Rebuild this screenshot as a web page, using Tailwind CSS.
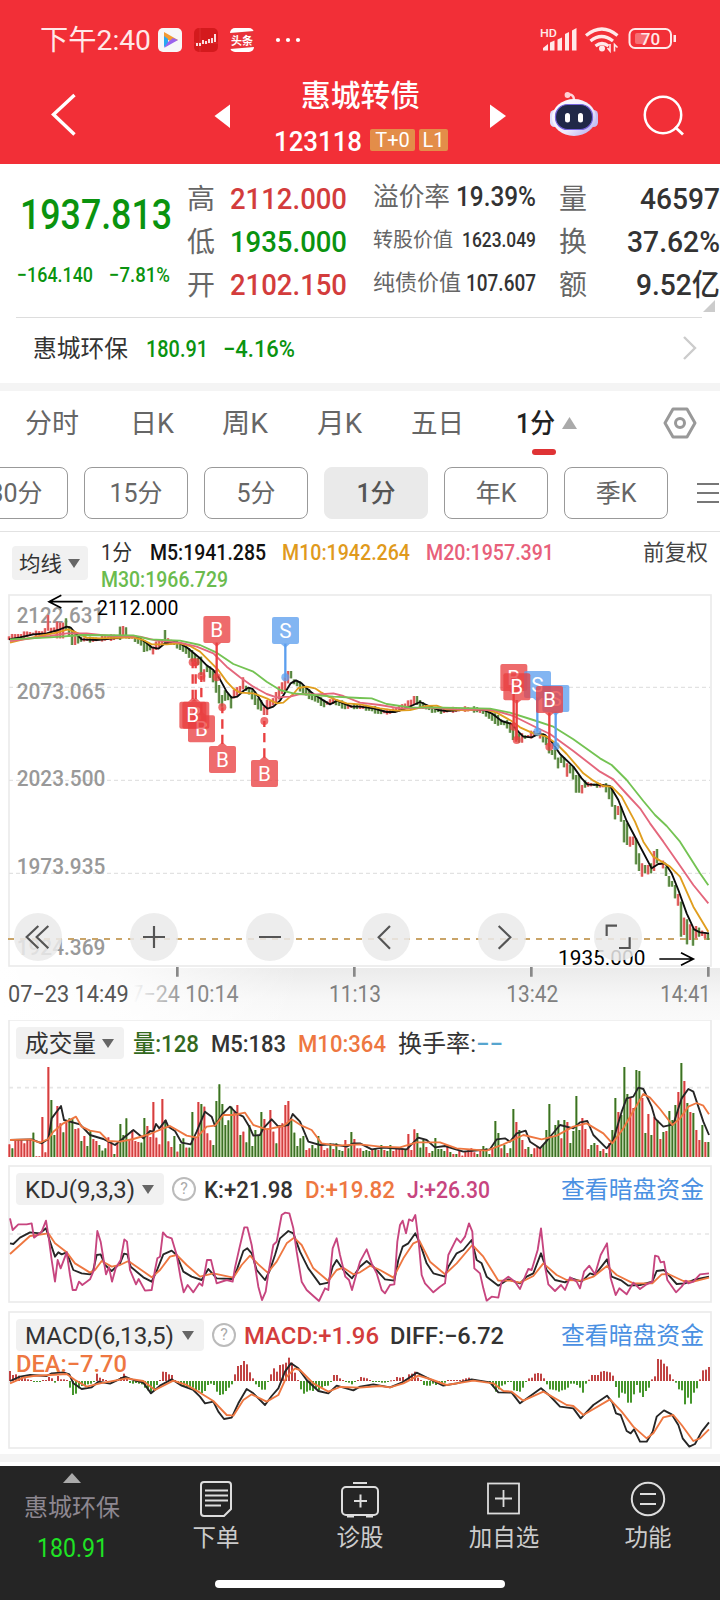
<!DOCTYPE html>
<html lang="zh-CN">
<head>
<meta charset="utf-8">
<title>惠城转债 123118</title>
<script src="https://cdn.jsdelivr.net/npm/@tailwindcss/browser@4"></script>
</head>
<body class="w-[720px] h-[1600px] overflow-hidden bg-white font-['Roboto','Noto_Sans_CJK_SC',sans-serif] text-[#333] flex flex-col">

<!-- status bar and title -->
<header class="relative h-[164px] bg-[#f22f37] text-white shrink-0">
  <div class="flex items-center h-[78px] pl-10">
    <span data-w="111" class="text-[28px] leading-[40px] text-[#ffe9e9]">下午2:40</span>
    <svg class="ml-[7px] mt-px" width="150" height="24" viewBox="0 0 150 24">
      <rect width="24" height="24" rx="5" fill="#f7f7f8"/>
      <path d="M6 4 20 12 14 14.500 6 9z" fill="#f39a32"/><path d="M6 8v11l4-2v-6z" fill="#27a9f2"/><path d="M20 12 6 20l4-6 5-4z" fill="#9a63ee"/>
      <rect x="36" width="24" height="24" rx="5" fill="#d41a1d"/>
      <path d="M42 0v24M36 15h24" stroke="#e23a3c" stroke-width=".6"/>
      <path d="M39 15v3M42 15v3M45 12v4M48 13v3M51 11v4M54 10v5M57 6v8" stroke="#fff" stroke-width="1.700"/>
      <rect x="72" width="24" height="24" rx="5" fill="#fff"/><path d="M72 5l24-2v16l-24 2z" fill="#e8333a"/>
      <text x="84" y="16.500" font-size="11" font-weight="700" text-anchor="middle" fill="#fff">头条</text>
      <circle cx="120" cy="12" r="2.100" fill="#fff"/><circle cx="130" cy="12" r="2.100" fill="#fff"/><circle cx="140" cy="12" r="2.100" fill="#fff"/>
    </svg>
    <svg class="ml-auto mr-[42px] mt-px" width="138" height="28" viewBox="0 0 138 28" fill="#ffe9e9">
      <text x="0" y="11" font-size="11" textLength="17" lengthAdjust="spacingAndGlyphs" font-weight="500" font-family="Roboto">HD</text>
      <path d="M3 24.500v-2.500l5-4v6.500zM10 24.500v-8l4.500-2v10zM17.500 24.500v-11l4.500-2v13zM25 24.500V8l4-2v18.500zM32 24.500V4.500l4.500-2.500v22.500z"/>
      <g fill="none" stroke="#ffe9e9" stroke-width="3.200"><path d="M46 9.500q16-13 31.500 0M50.500 15q11-9 22.500 0M55.500 20q6.500-5 13 0"/></g>
      <circle cx="62" cy="22.500" r="3"/><path d="M70 18v7l-2.500-3M74.500 25.500v-7l3 3" fill="none" stroke="#ffe9e9" stroke-width="1.600"/>
      <rect x="89.500" y="3" width="41.500" height="19" rx="5.500" fill="none" stroke="#ffe9e9" stroke-width="2"/>
      <rect x="95" y="7" width="12" height="11" rx="2" opacity=".35"/><path d="M133.500 9h2.500v7h-2.500z"/>
      <text x="110.500" y="18.500" font-size="17" font-weight="500" text-anchor="middle" font-family="Roboto">70</text>
    </svg>
  </div>
  <div class="flex h-[76px]">
    <svg width="270" height="76" viewBox="0 78 270 76" fill="none"><path d="M74.500 95 53.500 114.500 74.500 134.500" stroke="#fff" stroke-width="3.400"/><path d="M214.500 116 230 104.500V128z" fill="#fff"/></svg>
    <div class="w-[180px] flex flex-col items-center">
      <span data-w="119" class="text-[30px] leading-[34px] font-medium">惠城转债</span>
      <div class="flex items-center self-start pl-[4px] mt-[11px] h-[34px] leading-[34px]">
        <span data-w="88" class="text-[28px] font-medium leading-[34px]">123118</span>
        <span class="ml-[8px] w-[45px] h-[22px] rounded-[2px] bg-[#e38d49] text-[20px] leading-[23px] text-center">T+0</span>
        <span class="ml-[4px] w-[29px] h-[22px] rounded-[2px] bg-[#e38d49] text-[20px] leading-[23px] text-center">L1</span>
      </div>
    </div>
    <svg width="270" height="76" viewBox="450 78 270 76" fill="none">
      <defs><linearGradient id="bot" x1="0" y1="0" x2="1" y2="1"><stop offset="0" stop-color="#fff"/><stop offset=".6" stop-color="#efeafc"/><stop offset="1" stop-color="#a9a3ee"/></linearGradient></defs>
      <path d="M490 104.500 506 116 490 128z" fill="#fff"/>
      <path d="M566 95q8-2 8 5" stroke="#ffd5dc" stroke-width="2.400"/><circle cx="567.500" cy="95" r="2.900" fill="#ffd0d6"/>
      <rect x="550" y="110" width="9" height="17" rx="4.500" fill="#e0ddfa"/><rect x="589" y="110" width="9" height="17" rx="4.500" fill="#c5c0f4"/>
      <ellipse cx="574" cy="117.500" rx="22" ry="18.500" fill="url(#bot)"/>
      <rect x="555.500" y="104.500" width="37" height="25" rx="12" fill="#202848" stroke="#7764dc" stroke-width="1.200"/>
      <rect x="565" y="113" width="5" height="9.500" rx="2.500" fill="#fff"/><rect x="578" y="113" width="5" height="9.500" rx="2.500" fill="#fff"/>
      <circle cx="663" cy="115" r="18.200" stroke="#fff" stroke-width="2.500"/><path d="M675 127l8 7.500" stroke="#fff" stroke-width="2.800"/>
    </svg>
  </div>
</header>

<!-- quote -->
<section class="h-[153px] flex shrink-0 leading-[30px]">
  <div class="w-[187px] pl-[17px] text-[#0a930f] flex flex-col">
    <span data-w="152" class="ml-[3px] mt-[26px] text-[42px] leading-[46px] font-medium">1937.813</span>
    <div class="flex mt-[26px] h-[24px] text-[21px] leading-[24px] font-medium"><span data-w="76">−164.140</span><span data-w="61" class="ml-[16px]">−7.81%</span></div>
  </div>
  <div class="w-[186px] pt-[12px] grid grid-cols-[43px_1fr] grid-rows-[43px_43px_43px] items-center text-[#666]">
    <span data-w="28" class="text-[28px]">高</span><span data-w="117" class="text-[29px] font-medium text-[#d33c3c]">2112.000</span>
    <span data-w="28" class="text-[28px]">低</span><span data-w="117" class="text-[29px] font-medium text-[#0a930f]">1935.000</span>
    <span data-w="28" class="text-[28px]">开</span><span data-w="117" class="text-[29px] font-medium text-[#d33c3c]">2102.150</span>
  </div>
  <div class="w-[163px] pt-[11px] grid grid-rows-[42px_43px_43px] items-center text-[#666]">
    <div class="flex items-center justify-between"><span data-w="77" class="text-[26px]">溢价率</span><span data-w="80" class="text-[27px] font-medium text-[#333]">19.39%</span></div>
    <div class="flex items-center justify-between"><span data-w="80" class="text-[20px]">转股价值</span><span data-w="74" class="text-[21px] font-medium text-[#333]">1623.049</span></div>
    <div class="flex items-center justify-between"><span data-w="88" class="text-[22px]">纯债价值</span><span data-w="70" class="text-[23px] font-medium text-[#333]">107.607</span></div>
  </div>
  <div class="relative w-[184px] pl-[23px] pt-[12px] grid grid-rows-[43px_43px_43px] items-center text-[#666] text-[28px]">
    <div class="flex items-center justify-between"><span data-w="28">量</span><span data-w="80" class="text-[30px] font-medium text-[#333]">46597</span></div>
    <div class="flex items-center justify-between"><span data-w="28">换</span><span data-w="93" class="text-[30px] font-medium text-[#333]">37.62%</span></div>
    <div class="flex items-center justify-between"><span data-w="28">额</span><span data-w="84" class="text-[30px] font-medium text-[#333]">9.52亿</span></div>
    <svg class="absolute right-[5px] bottom-[5px]" width="12" height="12"><path d="M12 0v12H0z" fill="#ccc"/></svg>
  </div>
</section>

<section class="h-[66px] ml-4 mr-[18px] border-t border-[#ddd] flex items-center pl-[17px] pr-[5px] pb-[5px] text-[24px] leading-[30px] shrink-0">
  <span data-w="95">惠城环保</span>
  <span data-w="62" class="ml-[18px] font-medium text-[#0a930f]">180.91</span>
  <span data-w="72" class="ml-[15px] font-medium text-[#0a930f]">−4.16%</span>
  <svg class="ml-auto" width="15" height="24" viewBox="0 0 15 24"><path d="M2 1 13 12 2 23" fill="none" stroke="#ccc" stroke-width="2.400"/></svg>
</section>
<div class="h-2 bg-[#f4f4f4] shrink-0"></div>

<!-- period tabs -->
<nav class="relative h-[76px] shrink-0 pb-[12px] flex items-center text-[27px] leading-[36px] text-[#666]">
  <span data-w="54" class="ml-[25px]">分时</span>
  <span data-w="44" class="ml-[51px]">日K</span>
  <span data-w="46" class="ml-[48px]">周K</span>
  <span data-w="45" class="ml-[49px]">月K</span>
  <span data-w="53" class="ml-[49px]">五日</span>
  <span data-w="39" class="ml-[52px] font-medium text-[#222]">1分</span>
  <svg class="ml-[7px]" width="15" height="13"><path d="M7.500 0 15 12H0z" fill="#aaa"/></svg>
  <svg class="ml-[86px]" width="34" height="34" viewBox="0 0 34 34" fill="none" stroke="#999"><path d="M10 3h14l8 14-8 14H10L2 17z" stroke-width="3" stroke-linejoin="round"/><circle cx="17" cy="17" r="4.500" stroke-width="3"/></svg>
  <i class="absolute left-[532px] top-[58px] w-6 h-[6px] rounded-full bg-[#df3335]"></i>
</nav>
<div class="h-[65px] shrink-0 border-b border-[#e2e2e2] flex items-start text-[25px] text-center leading-[52px] text-[#666]">
  <span class="w-[104px] h-[52px] ml-[-36px] border border-[#999] rounded-lg shrink-0">30分</span>
  <span class="w-[104px] h-[52px] ml-4 border border-[#999] rounded-lg shrink-0">15分</span>
  <span class="w-[104px] h-[52px] ml-4 border border-[#999] rounded-lg shrink-0">5分</span>
  <span class="w-[104px] h-[52px] ml-4 border border-[#eaeaea] bg-[#eaeaea] rounded-lg shrink-0 font-medium text-[#555]">1分</span>
  <span class="w-[104px] h-[52px] ml-4 border border-[#999] rounded-lg shrink-0">年K</span>
  <span class="w-[104px] h-[52px] ml-4 border border-[#999] rounded-lg shrink-0">季K</span>
  <svg class="ml-[29px] mt-[15px] shrink-0" width="22" height="22"><path d="M0 2h22M0 11h22M0 20h22" stroke="#777" stroke-width="1.800"/></svg>
</div>

<!-- moving averages -->
<div class="h-[58px] shrink-0 flex text-[22px] leading-[27px]">
  <span class="w-[76px] h-[34px] ml-3 mt-[14px] rounded bg-[#f1f1f1] flex items-center justify-between pl-[7px] pr-2 text-[21px]"><span data-w="43">均线</span><svg width="12" height="9"><path d="M0 0h12L6 9z" fill="#666"/></svg></span>
  <div class="ml-[13px] mt-[6px] grow font-medium">
    <div class="flex">
      <span data-w="31" class="font-normal">1分</span>
      <span data-w="116" class="ml-[18px] text-[#111]">M5:1941.285</span>
      <span data-w="128" class="ml-[16px] text-[#e09a1c]">M10:1942.264</span>
      <span data-w="128" class="ml-[16px] text-[#e8607a]">M20:1957.391</span>
      <span data-w="65" class="ml-auto mr-[12px] font-normal text-[#444]">前复权</span>
    </div>
    <div><span data-w="127" class="text-[#6bbb4e]">M30:1966.729</span></div>
  </div>
</div>

<!-- candles; chart units are thirds of a pixel -->
<svg id="main" class="shrink-0 block" width="720" height="430" viewBox="0 0 2160 1290" font-family="Roboto">
  <defs>
    <linearGradient id="shade" x1="0" y1="0" x2="0" y2="1"><stop offset="0" stop-color="#ebebeb"/><stop offset=".6" stop-color="#f7f7f7"/><stop offset="1" stop-color="#fafafa"/></linearGradient>
    <linearGradient id="white" x1="0" y1="0" x2="1" y2="0"><stop offset="0" stop-color="#fff"/><stop offset=".4" stop-color="#fff" stop-opacity=".8"/><stop offset="1" stop-color="#fff" stop-opacity="0"/></linearGradient>
    <linearGradient id="fade" gradientUnits="userSpaceOnUse" x1="400" y1="0" x2="560" y2="0"><stop offset="0" stop-color="#888" stop-opacity="0"/><stop offset="1" stop-color="#888"/></linearGradient>
  </defs>
  <rect y="1134" width="2160" height="156" fill="url(#shade)"/><rect y="1134" width="900" height="156" fill="url(#white)"/>
  <rect x="27" y="15" width="2106" height="1113" fill="#fff" stroke="#ebebeb" stroke-width="5"/>
  <path d="M27 292H2130M27 571H2130M27 850H2130" stroke="#e2e2e2" stroke-width="4" stroke-dasharray="12 9"/>
  <g font-size="68" fill="#999" font-weight="500">
    <text x="50" y="99" textLength="262" lengthAdjust="spacingAndGlyphs">2122.631</text>
    <text x="50" y="326" textLength="266" lengthAdjust="spacingAndGlyphs">2073.065</text>
    <text x="50" y="587" textLength="266" lengthAdjust="spacingAndGlyphs">2023.500</text>
    <text x="50" y="852" textLength="266" lengthAdjust="spacingAndGlyphs">1973.935</text>
    <text x="50" y="1095" textLength="266" lengthAdjust="spacingAndGlyphs">1924.369</text>
  </g>
  <path d="M24 1047H2130" stroke="#c9a468" stroke-width="6" stroke-dasharray="18 18"/>
  <g id="candles"></g><g id="ma" fill="none"></g>
  <text x="291" y="75" font-size="62" textLength="244" lengthAdjust="spacingAndGlyphs" fill="#000">2112.000</text>
  <text x="1674" y="1125" font-size="62" textLength="262" lengthAdjust="spacingAndGlyphs" fill="#000">1935.000</text>
  <path d="M248 35H147M184 16 147 35l37 19M1978 1107h102M2043 1088l37 19-37 19" fill="none" stroke="#000" stroke-width="5"/>
  <g id="marks" fill="none"></g>
  <g fill="#eaeaea" fill-opacity=".86"><circle cx="114" cy="1041" r="72"/><circle cx="462" cy="1041" r="72"/><circle cx="810" cy="1041" r="72"/><circle cx="1158" cy="1041" r="72"/><circle cx="1506" cy="1041" r="72"/><circle cx="1854" cy="1041" r="72"/></g>
  <path d="M115 1008 80 1041l35 34M145 1008l-35 33 35 34M429 1041h66M462 1008v66M777 1041h66M1170 1008l-34 34 34 34M1496 1008l35 34-35 34M1820 1038v-31h31M1857 1074h32v-32" fill="none" stroke="#555" stroke-width="6.500"/>
  <path d="M532 1131v29M1063 1131v29M1594 1131v29M2125 1131v29" stroke="#888" stroke-width="8"/>
  <g font-size="69" fill="#808080">
    <text x="24" y="1235" fill="#555" textLength="362" lengthAdjust="spacingAndGlyphs">07−23 14:49</text>
    <text x="394" y="1235" fill="url(#fade)" textLength="322" lengthAdjust="spacingAndGlyphs">7−24 10:14</text>
    <text x="987" y="1235" textLength="156" lengthAdjust="spacingAndGlyphs">11:13</text>
    <text x="1519" y="1235" textLength="156" lengthAdjust="spacingAndGlyphs">13:42</text>
    <text x="1981" y="1235" textLength="151" lengthAdjust="spacingAndGlyphs">14:41</text>
  </g>
</svg>

<!-- volume -->
<section class="relative h-[145px] shrink-0">
  <svg id="vol" class="absolute inset-0" width="720" height="145" viewBox="0 15 2160 435"><path d="M27 426V15H2133V426" fill="none" stroke="#ebebeb" stroke-width="5"/><path d="M27 218H2130" stroke="#e6e6e6" stroke-width="5" stroke-dasharray="12 12"/></svg>
  <div class="relative flex items-center pl-4 pt-[7px] text-[24px] leading-[32px] font-medium">
    <span class="w-[108px] h-[32px] rounded bg-[#f1f1f1] flex items-center justify-between pl-[9px] pr-[10px] font-normal"><span data-w="71">成交量</span><svg width="12" height="9"><path d="M0 0h12L6 9z" fill="#666"/></svg></span>
    <span data-w="66" class="ml-[9px] text-[#33691e]">量:128</span>
    <span data-w="75" class="ml-[12px]">M5:183</span>
    <span data-w="88" class="ml-[12px] text-[#ee7741]">M10:364</span>
    <span data-w="78" class="ml-[12px] font-normal">换手率:</span><span data-w="27" class="text-[#56a5cf]">−−</span>
  </div>
</section>
<!-- KDJ -->
<section class="relative h-[146px] shrink-0">
  <svg id="kdj" class="absolute inset-0" width="720" height="146" viewBox="0 450 2160 438"><rect x="27" y="453" width="2106" height="408" fill="none" stroke="#ebebeb" stroke-width="5"/><path d="M27 657H2130" stroke="#e6e6e6" stroke-width="5" stroke-dasharray="12 12"/></svg>
  <div class="relative flex items-center pl-4 pr-[16px] pt-2 text-[24px] leading-[32px] font-medium">
    <span class="w-[148px] h-[32px] rounded bg-[#f1f1f1] flex items-center justify-between pl-[9px] pr-[10px] font-normal"><span data-w="110">KDJ(9,3,3)</span><svg width="12" height="9"><path d="M0 0h12L6 9z" fill="#666"/></svg></span>
    <span class="ml-2 size-[24px] rounded-full border-2 border-[#bbb] text-[#aaa] text-[16px] leading-[20px] text-center font-normal">?</span>
    <span data-w="89" class="ml-[8px]">K:+21.98</span>
    <span data-w="90" class="ml-[12px] text-[#ee7741]">D:+19.82</span>
    <span data-w="83" class="ml-[12px] text-[#c7457f]">J:+26.30</span>
    <span data-w="143" class="ml-auto font-normal text-[#4a90e2]">查看暗盘资金</span>
  </div>
</section>
<!-- MACD -->
<section class="relative h-[143px] shrink-0">
  <svg id="macd" class="absolute inset-0" width="720" height="143" viewBox="0 888 2160 429"><rect x="27" y="891" width="2106" height="408" fill="none" stroke="#ebebeb" stroke-width="5"/></svg>
  <div class="relative flex items-center pl-4 pr-[16px] pt-2 text-[24px] leading-[32px] font-medium">
    <span class="w-[188px] h-[32px] rounded bg-[#f1f1f1] flex items-center justify-between pl-[9px] pr-[10px] font-normal"><span data-w="149">MACD(6,13,5)</span><svg width="12" height="9"><path d="M0 0h12L6 9z" fill="#666"/></svg></span>
    <span class="ml-2 size-[24px] rounded-full border-2 border-[#bbb] text-[#aaa] text-[16px] leading-[20px] text-center font-normal">?</span>
    <span data-w="135" class="ml-[8px] text-[#d33c3c]">MACD:+1.96</span>
    <span data-w="114" class="ml-[11px]">DIFF:−6.72</span>
    <span data-w="143" class="ml-auto font-normal text-[#4a90e2]">查看暗盘资金</span>
  </div>
  <div class="relative pl-4 text-[24px] leading-[24px] font-medium text-[#ee7741]"><span data-w="111">DEA:−7.70</span></div>
</section>
<div class="h-2 bg-[#f4f4f4] mb-1 shrink-0"></div>

<!-- bottom bar -->
<footer class="h-[134px] shrink-0 bg-[#252525] text-[#ccc] flex flex-col">
  <div class="grid grid-cols-5 h-[114px] text-[23.500px] leading-[30px]">
    <div class="flex flex-col items-center pt-[7px]"><svg width="18" height="10"><path d="M9 0 18 10H0z" fill="#aaa"/></svg>
      <span data-w="96" class="mt-[9px] text-[24px] text-[#8d8790]">惠城环保</span>
      <span data-w="71" class="mt-[11px] text-[25px] text-[#1fe324]">180.91</span></div>
    <div class="flex flex-col items-center pt-[14px]"><svg width="40" height="38" viewBox="0 0 40 38" fill="none" stroke="#ddd" stroke-width="2"><path d="M8 2h24q3 0 3 3v24l-7 7H8q-3 0-3-3V5q0-3 3-3z"/><path d="M9 10.500h23M9 15.500h23M9 20.500h23M9 25.500h16"/></svg><span class="mt-[5px]">下单</span></div>
    <div class="flex flex-col items-center pt-[14px]"><svg width="40" height="38" viewBox="0 0 40 38" fill="none" stroke="#ddd" stroke-width="2"><rect x="2" y="7" width="36" height="28" rx="4"/><path d="M13 3h14M14 21h13M20.500 14.500v13"/><path d="M7 36h7M26 36h7" stroke-width="3"/></svg><span class="mt-[5px]">诊股</span></div>
    <div class="flex flex-col items-center pt-[14px]"><svg width="40" height="38" viewBox="0 0 40 38" fill="none" stroke="#ddd" stroke-width="1.800"><rect x="4" y="3.500" width="31" height="30"/><path d="M11 18.500h17M19.500 10v17"/></svg><span class="mt-[5px]">加自选</span></div>
    <div class="flex flex-col items-center pt-[14px]"><svg width="40" height="38" viewBox="0 0 40 38" fill="none" stroke="#ddd" stroke-width="2"><circle cx="20" cy="19" r="16.200"/><path d="M12 14h16M12 24h16"/></svg><span class="mt-[5px]">功能</span></div>
  </div>
  <div class="w-[290px] h-2 rounded-full bg-white mx-auto"></div>
</footer>

<script>
const NS = 'http://www.w3.org/2000/svg', $ = id => document.getElementById(id);
function add(p, tag, a, text) { const e = document.createElementNS(NS, tag); for (const k in a) e.setAttribute(k, a[k]); if (text) e.textContent = text; p.appendChild(e); return e; }

// Fit each label to its slot width, one line high
document.querySelectorAll('[data-w]').forEach(el => {
  const w = el.dataset.w, t = el.textContent;
  el.textContent = '';
  el.style.cssText = `display:block;flex:none;width:${w}px`;
  const s = add(el, 'svg', { width: w, style: 'display:block;height:1lh;overflow:visible' });
  add(s, 'text', { x: 0, y: '50%', dy: '.375em', textLength: w, lengthAdjust: 'spacingAndGlyphs', fill: 'currentColor' }, t);
});

// Left half and right half (right half starts at 1080)
function pts(l, r) { const f = (s, d) => s.trim().split(/\s+/).map(q => q.split(',').map(Number)).map(([x, y]) => [x + d, y]); return f(l, 0).concat(f(r, 1080)); }
function line(p, color, P) { add(p, 'polyline', { points: P.map(q => q.join(',')).join(' '), stroke: color, fill: 'none', 'stroke-width': 5.6, 'stroke-linejoin': 'round' }); }
const at = (P, x) => { for (let i = 1; i < P.length; i++) if (x <= P[i][0]) { const [a, b] = P[i - 1], [c, d] = P[i]; return b + (d - b) * Math.max(0, x - a) / (c - a); } return P[P.length - 1][1]; };
function bar(p, x, y, y2, red) { add(p, 'rect', { x: x - 4, y, width: 8, height: y2 - y, fill: red ? '#f28484' : '#8fb576' }); add(p, 'rect', { x: x - 1.5, y, width: 3.5, height: y2 - y, fill: red ? '#d04040' : '#3c6f26' }); }

const m5 = pts('27,148 60,142 100,133 140,130 175,120 200,110 212,113 225,128 245,148 290,150 340,145 385,140 415,143 435,155 455,172 475,176 495,160 520,155 540,160 560,172 580,188 600,205 620,226 640,240 660,268 680,305 695,323 712,320 730,303 745,293 758,297 775,320 790,345 803,356 820,350 840,332 858,303 872,280 888,271 905,280 920,295 940,312 965,328 990,343 1012,332 1030,340 1055,350',
 '0,350 40,355 80,366 105,366 130,358 160,345 180,336 200,345 235,360 260,363 330,358 370,360 395,370 425,393 455,402 475,425 490,440 515,442 535,432 555,435 575,455 600,492 640,530 665,565 682,583 720,585 750,588 775,630 800,693 830,750 875,835 895,822 915,820 935,850 955,900 980,970 1002,1018 1020,1027 1047,1030');
const fixed = {};
'144,75,122,r 171,95,145,r 180,98,145,r 189,98,145,r 198,85,120,g 216,120,165,g 225,125,165,r 360,110,150,g 369,108,135,r 378,112,145,g 432,150,186,g 459,170,193,r 495,120,160,g 576,180,215,g 603,200,255,g 612,238,275,r 648,240,308,g 657,285,340,g 666,315,350,g 693,318,355,g 702,300,325,r 729,262,298,r 765,305,345,g 774,325,358,g 783,330,362,g 792,350,375,r 801,330,375,r 855,262,300,r 864,243,280,r 873,243,265,g 1242,318,345,r 1251,318,345,g 1485,370,402,g 1494,375,407,g 1539,400,450,g 1548,410,455,r 1557,430,458,g 1566,430,458,r 1647,440,490,g 1656,480,495,g 1674,503,535,g 1701,520,560,r 1728,555,608,g 1737,555,608,g 1746,585,610,r 1836,590,650,g 1845,645,688,g 1854,648,675,r 1863,650,695,g 1872,690,757,g 1881,700,765,g 1890,740,770,r 1899,740,765,r 1908,745,823,g 1917,790,843,g 1926,820,860,r 1935,825,850,g 1944,825,853,r 1953,820,850,g 1962,783,843,r 1971,777,820,g 1989,812,835,r 1998,830,858,g 2007,858,890,g 2016,873,890,g 2025,885,925,g 2034,912,947,r 2043,935,1040,g 2052,983,1035,r 2061,988,1063,g 2070,1003,1050,r 2079,1015,1067,g 2088,1008,1045,r 2097,1013,1040,g 2106,1022,1038,r 2115,1030,1045,r 2124,1030,1050,g'
 .split(' ').forEach(s => { const [x, a, b, c] = s.split(','); fixed[x] = [+a, +b, c === 'r']; });
for (let x = 27; x <= 2127; x += 9) {
  if (fixed[x]) { bar($('candles'), x, ...fixed[x]); continue; }
  const y = at(m5, x + 16), d = y - at(m5, x + 4), h = 3 + (x * 7 % 11) * .7 + Math.abs(d) * .7;
  bar($('candles'), x, y - h, y + h * .8, d < 0 || (Math.abs(d) < 3 && x % 4 < 2));
}
const ma = $('ma');
line(ma, '#0c0c0c', m5);
line(ma, '#e09e1e', pts('30,158 70,148 120,138 170,128 205,118 235,130 260,143 300,145 400,142 430,150 455,163 500,163 540,160 570,168 600,185 630,215 655,240 680,275 700,296 720,308 760,310 800,325 830,340 850,338 880,312 895,294 920,290 945,295 965,308 985,320 1010,330 1040,340', '0,343 60,355 110,362 150,360 200,348 230,347 260,358 320,361 370,357 410,368 455,393 480,412 520,430 560,440 590,462 620,492 670,550 700,572 730,588 755,590 785,620 825,695 850,755 880,800 930,830 960,860 1000,950 1045,1025'));
line(ma, '#e4677c', pts('30,153 150,138 200,130 260,130 330,138 420,140 470,152 540,158 590,170 640,190 680,230 720,262 760,290 800,312 830,322 870,320 900,312 950,313 1000,310 1030,318', '0,338 60,345 120,355 200,353 300,358 400,360 460,378 520,408 570,432 640,483 720,545 760,568 800,612 840,655 870,700 910,755 955,820 1000,885 1045,940'));
line(ma, '#74c353', pts('30,148 150,142 250,135 400,136 450,148 540,152 600,165 650,188 700,222 760,245 800,275 840,300 880,310 940,315 1000,320', '0,324 35,325 80,342 150,352 250,353 390,356 450,368 520,390 580,410 640,448 720,505 755,525 800,570 850,633 885,675 920,708 960,755 1020,850 1045,886'));

// Trade markers: x, box top, anchor y, side
[[587,335,217,'B'],[604,376,258,'B'],[578,335,217,'B'],[667,468,352,'B'],[793,510,393,'B'],[650,78,262,'B'],[856,81,262,'S'],[1541,222,410,'B'],[1612,243,425,'S'],[1550,250,450,'B'],[1667,285,468,'S'],[1648,288,470,'B']].forEach(([x, t, y, s]) => {
  const c = s === 'B' ? '#e93f40' : '#5c9fee', up = t < y, e = up ? t + 80 : t;
  add($('marks'), 'path', { d: `M${x} ${y}V${e}`, stroke: c, 'stroke-width': 7, ...(up ? {} : { 'stroke-dasharray': '28 18', 'stroke-dashoffset': 10 }) });
  add($('marks'), 'circle', { cx: x, cy: y, r: 12, fill: c, 'fill-opacity': .75 });
  add($('marks'), 'path', { d: up ? `M${x - 14} ${e}h28l-14 12z` : `M${x - 14} ${e}h28l-14-12z`, fill: c, 'fill-opacity': .77 });
  add($('marks'), 'rect', { x: x - 40, y: t, width: 81, height: 81, rx: 6, fill: c, 'fill-opacity': .77 });
  add($('marks'), 'text', { x, y: t + 62, 'font-size': 62, 'text-anchor': 'middle', fill: '#fff' }, s);
});

// Volume: bar tops with colour
const V = '388r400g378r372r372r385r372r375r353g424r424r306r412r156r255g360g273r325r352g320r310g310g342r340r378g363r393g345g372r378r390g407g400g367r382r417g385r327g360g310g372r345r378r381r383g309g333r366r261r368r388r252r315g379r396r363g410r387g370g398r398g291g370r261r267g275r355r376r390g258g208g267g330g316g275g290r270r360g350r382g330g393g345g360g291g312r340r285r350r385g330r325r270r258r315g353g393g370g363g405r400r390g400g363g385r405r400r385g402r385g405g408g375r400g351g372r400r' +
 '400r408g405g408g405r400g405r390g405r408g390g408r400r402r400r402g357r405r343r354g398g375g396r414r408g369g402g402g408g390r411g417r417g405r422r410r402r400r412r417g408r393g400g417g400r318g354g400r390g414r400g282g321r345g375r402r396g417g400r396r400r390g345g267g363g330g316g370r315g321r384g348g243g345g309r342r402r390g384g390r408g402r414g384r345g249g291r300g156g237g249r279r165g168g249r354g297r360g306r315g372r351g348r288g315g270g231r144g198r264g291r294g345r375r330g381r381g';
[...V.matchAll(/(\d+)(r|g)/g)].forEach((m, i) => bar($('vol'), 28 + 9 * i, +m[1], 426, m[2] === 'r'));
line($('vol'), '#262626', pts('30,375 95,373 125,385 145,372 155,310 183,273 192,315 240,328 270,360 310,372 345,390 400,345 430,370 450,348 460,350 468,327 478,340 497,316 505,335 525,348 545,383 572,388 590,350 615,290 635,305 645,333 665,300 690,275 710,295 730,305 748,335 760,362 780,360 790,340 815,313 835,335 865,330 878,297 900,320 925,380 960,390 1000,388 1040,395 1060,385', '0,385 35,403 70,398 140,403 175,368 200,375 225,397 255,393 310,410 390,403 410,373 435,370 450,380 470,355 497,347 510,380 540,400 560,378 600,330 640,340 660,322 682,318 700,360 740,400 760,375 785,290 800,250 820,245 835,218 850,222 875,275 885,310 910,335 940,328 965,250 985,222 1000,230 1015,275 1030,320 1047,360'));
line($('vol'), '#ee7741', pts('30,375 90,373 120,383 145,372 160,350 190,325 228,305 245,335 270,347 300,352 325,378 360,380 400,372 450,357 490,340 510,333 560,362 590,368 620,335 645,332 670,300 700,300 735,293 760,330 800,343 850,333 875,313 905,332 935,345 965,385 1010,392', '0,388 60,395 120,397 170,382 240,382 290,400 380,407 430,388 490,360 545,373 590,362 640,335 680,325 730,355 757,385 790,340 850,237 870,248 900,282 937,330 960,310 985,275 1010,264 1030,272 1047,298'));

line($('kdj'), '#262626', pts('30,685 40,687 60,668 90,652 120,655 138,640 150,680 165,725 175,712 185,718 200,712 220,765 245,775 270,778 280,765 290,720 302,718 315,750 335,768 360,745 372,716 382,718 392,755 410,770 430,787 455,800 470,768 490,718 515,707 530,720 550,770 575,785 605,795 625,762 650,790 698,792 712,760 730,708 742,700 755,715 770,765 795,795 810,765 825,720 840,670 865,648 880,655 900,710 925,760 960,808 985,803 998,755 1010,735 1030,765 1056,790', '0,755 20,738 40,755 75,793 103,797 115,735 128,695 145,685 166,655 180,685 200,745 220,775 255,785 265,755 290,715 310,705 335,675 350,735 365,745 380,785 415,812 445,793 480,805 500,785 520,775 543,715 560,765 585,795 615,802 635,790 665,800 690,775 705,780 741,733 755,785 785,797 805,812 840,810 877,800 890,768 912,765 930,785 950,807 975,805 1000,795 1047,785'));
line($('kdj'), '#ee7741', pts('30,717 60,690 90,663 145,655 165,685 200,712 225,745 270,773 285,765 305,738 335,755 360,750 385,738 410,755 455,787 480,765 510,725 530,720 560,750 600,785 640,775 700,788 725,750 750,722 775,748 803,773 830,740 860,685 882,668 905,690 940,760 985,798 1010,765 1030,758 1060,778', '0,772 30,752 60,765 100,788 130,730 160,685 178,677 210,740 255,778 290,745 337,690 370,725 415,797 450,797 480,803 520,783 550,745 590,780 620,795 665,797 700,785 741,753 770,780 820,805 877,805 905,778 925,777 970,798 1000,800 1047,788'));
line($('kdj'), '#c7457f', pts('30,610 38,645 55,628 80,628 95,625 102,668 125,650 138,617 145,660 155,735 165,800 173,735 182,760 200,712 210,780 218,825 228,825 237,800 247,810 270,793 282,765 292,648 302,680 318,778 327,757 336,800 347,760 362,735 373,673 381,680 390,765 408,808 416,792 435,827 455,825 465,765 472,730 480,725 489,652 500,665 515,670 530,720 542,790 551,832 563,810 580,832 598,805 607,812 621,735 633,735 650,805 680,795 698,800 705,758 718,700 733,637 742,637 755,690 775,815 786,855 797,830 805,775 820,690 830,680 845,600 855,593 868,595 880,640 890,710 905,800 920,825 940,843 957,858 975,820 985,825 998,700 1010,670 1020,720 1036,785 1047,795 1056,825 1070,775', '0,740 20,703 35,745 50,775 65,825 75,835 90,810 103,808 112,680 120,630 128,617 138,655 147,613 157,618 166,600 176,680 185,780 195,805 220,832 240,815 255,805 265,720 290,670 302,683 315,665 327,625 337,650 343,760 360,775 370,820 380,857 395,845 415,848 425,800 445,785 465,800 480,822 497,780 505,762 515,765 533,705 543,640 556,760 565,808 585,828 603,810 615,825 630,787 650,800 660,820 672,770 688,752 705,778 722,720 741,685 752,790 767,840 778,820 800,838 820,803 840,822 860,808 877,800 885,722 895,725 902,742 912,740 922,795 948,832 965,815 978,797 985,805 1000,800 1020,778 1047,775'));

[30,18,20,16,12,8,5,3,-2,-2,-2,3,3,12,8,-5,15,5,5,3,-20,-42,-38,-22,-15,-12,-10,-8,-3,22,10,6,3,-3,-5,3,5,12,22,8,-6,-8,-6,-8,-10,-20,-28,-35,-25,-12,3,28,27,20,18,3,-8,-12,-16,-20,-22,-20,-30,-28,-36,-30,-12,-8,-12,-32,-42,-40,-30,-20,-10,20,45,48,60,50,26,8,-10,-18,-26,-26,-3,20,38,28,48,50,55,70,55,25,3,-25,-38,-32,-28,-30,-22,-28,-20,-15,-14,-3,18,18,8,3,-3,-5,-10,-3,3,
 12,10,8,3,-3,-2,-3,-5,-5,-2,2,3,12,10,12,5,20,22,28,10,3,-12,-14,-14,-8,-12,-8,-6,-5,3,3,3,3,3,5,8,10,6,3,2,2,-2,-4,-8,-16,-32,-25,-14,-10,-3,-3,-28,-30,-32,-20,-3,8,10,22,24,22,8,-10,-25,-26,-28,-32,-28,-26,-20,-8,-8,-12,-20,-35,-8,4,18,18,18,28,30,28,26,16,-18,-50,-35,-38,-65,-65,-40,-12,-35,-48,-30,-20,5,14,66,64,52,44,20,5,-5,-25,-28,-70,-50,-68,-35,-22,5,32,34,42,36]
 .slice(0, 234).forEach((v, i) => add($('macd'), 'rect', { x: 27 + 9 * i, y: v > 0 ? 1098 - v : 1098, width: 6, height: Math.max(3, Math.abs(v)), fill: v > 0 ? '#c04343' : '#45962c' }));
line($('macd'), '#262626', pts('30,1098 60,1085 90,1080 140,1083 155,1075 190,1072 208,1078 220,1105 245,1122 275,1117 295,1100 330,1106 375,1085 400,1095 430,1103 453,1135 480,1112 515,1093 545,1112 580,1125 600,1145 615,1165 640,1160 655,1190 672,1212 695,1208 715,1165 740,1122 760,1135 795,1170 815,1143 835,1120 855,1070 873,1045 895,1060 920,1095 955,1128 985,1135 1010,1112 1060,1126', '0,1115 40,1108 90,1117 125,1103 170,1073 200,1088 250,1112 290,1105 335,1093 390,1102 415,1132 455,1133 480,1165 515,1140 543,1120 570,1143 600,1175 640,1180 662,1210 700,1170 741,1142 757,1162 768,1195 782,1200 800,1248 812,1255 822,1243 840,1280 860,1280 878,1250 890,1205 912,1186 935,1198 955,1230 968,1270 988,1295 1005,1287 1025,1250 1047,1222'));
line($('macd'), '#ee7741', pts('30,1105 70,1088 100,1083 200,1077 225,1095 260,1115 300,1105 380,1090 430,1098 465,1125 520,1097 560,1110 600,1133 640,1158 680,1200 700,1202 730,1155 755,1138 800,1160 835,1140 860,1085 885,1060 900,1065 940,1105 985,1130 1020,1116', '0,1118 60,1113 90,1117 130,1105 175,1082 210,1092 260,1110 340,1097 400,1105 430,1128 455,1130 490,1157 550,1130 620,1170 640,1173 670,1200 750,1153 785,1190 820,1235 860,1270 880,1255 910,1207 940,1200 965,1230 1000,1278 1020,1270 1047,1243'));
</script>
</body>
</html>
